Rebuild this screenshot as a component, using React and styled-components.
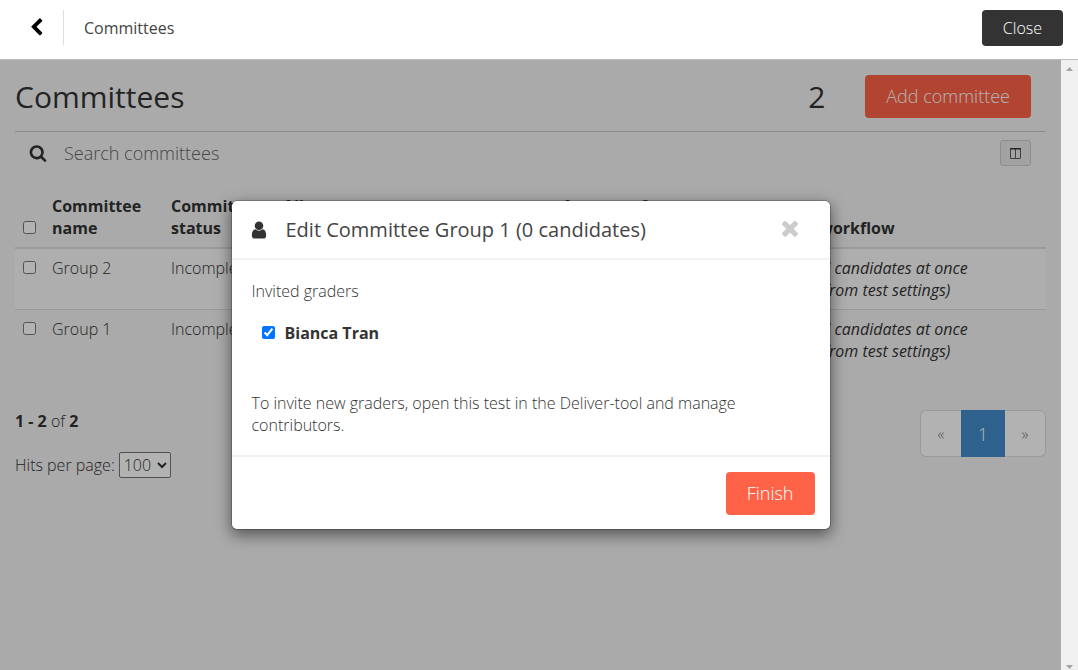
import styled, { createGlobalStyle } from "styled-components"

const GlobalStyle = createGlobalStyle`
  * {
    box-sizing: border-box;
  }
  body {
    margin: 0;
    background: #f4f4f4;
    color: #333;
    font-family: "Open Sans", sans-serif;
    font-size: 16px;
    font-weight: 300;
    line-height: 22px;
  }
  button, input, select {
    font-family: inherit;
    font-weight: inherit;
    color: inherit;
  }
  b {
    font-weight: 700;
  }
`

const Page = styled.div`
  display: flex;
  flex-direction: column;
  min-height: 100vh;
`
const TopBar = styled.header`
  display: flex;
  align-items: center;
  height: 60px;
  padding: 0 15px 4px;
  background: #fff;
  border-bottom: 1px solid #bbb;
`
const BackButton = styled.button`
  display: flex;
  align-items: center;
  justify-content: flex-end;
  width: 49px;
  height: 35px;
  padding: 0 17px 0 0;
  border: 0;
  border-right: 1px solid #ddd;
  background: none;
  color: #000;
`
const TopTitle = styled.span`
  flex: 1;
  padding-left: 20px;
  color: #444;
  font-weight: 400;
`
const CloseButton = styled.button`
  height: 36px;
  padding: 0 21px;
  border: 0;
  border-radius: 4px;
  background: #333;
  color: #fff;
  font-size: 16px;
`
const Frame = styled.div`
  display: flex;
  flex: 1;
`
const View = styled.div`
  position: relative;
  flex: 1;
`
const Content = styled.main`
  padding: 0 15px;
`
const ScrollTrack = styled.div`
  display: flex;
  flex-direction: column;
  align-items: center;
  justify-content: space-between;
  width: 17px;
  padding: 7px 0 1px;
  background: #f0f0f0;
  color: #a3a3a3;
`
const TitleRow = styled.div`
  display: flex;
  align-items: center;
  gap: 40px;
  padding: 15px 15px 13px 0;
  border-bottom: 1px solid #c8c8c8;
`
const Title = styled.h1`
  flex: 1;
  margin: 0;
  font-size: 30px;
  font-weight: 400;
  line-height: 42px;
`
const Count = styled.span`
  font-size: 30px;
  font-weight: 400;
`
const PrimaryButton = styled.button`
  height: 43px;
  padding: 0 21px 2px;
  border: 0;
  border-radius: 4px;
  background: #ff6347;
  color: #fff;
  font-size: 18px;
`
const SearchRow = styled.div`
  display: flex;
  align-items: center;
  padding: 8px 15px 0 14px;
  margin-bottom: 21px;
`
const SearchLabel = styled.label`
  display: flex;
  width: 35px;
`
const SearchInput = styled.input`
  flex: 1;
  height: 26px;
  padding: 0;
  border: 0;
  background: none;
  font-size: 18px;

  &::placeholder {
    color: #666;
    opacity: 1;
  }
`
const ColumnsButton = styled.button`
  display: flex;
  align-items: center;
  justify-content: center;
  width: 31px;
  height: 26px;
  padding: 0;
  border: 1px solid #ccc;
  border-radius: 3px;
  background: #e9e9e9;
`
const Table = styled.table`
  width: 100%;
  table-layout: fixed;
  border-collapse: collapse;
`
const Column = styled.col`
  width: ${(p) => p.$width};
`
const HeadCell = styled.th`
  padding: 8px;
  border-bottom: 2px solid #ddd;
  font-weight: 700;
  text-align: left;
  vertical-align: bottom;
`
const Row = styled.tr`
  background: ${(p) => (p.$striped ? "#f9f9f9" : "transparent")};

  & + & {
    border-top: 1px solid #ddd;
  }
`
const Cell = styled.td`
  padding: 8px;
  vertical-align: top;
`
const Workflow = styled.em`
  font-weight: 400;
`
const Checkbox = styled.input`
  display: block;
  width: 13px;
  height: 13px;
  margin: 4px 0 5px;
`
const BottomRow = styled.div`
  display: flex;
  align-items: flex-start;
  justify-content: space-between;
  margin-top: 40px;
`
const Hits = styled.div`
  display: flex;
  flex-direction: column;
  gap: 20px;
`
const HitsLabel = styled.label`
  display: flex;
  align-items: center;
  gap: 4px;
`
const HitsSelect = styled.select`
  height: 26px;
  width: 52px;
  padding: 0;
  border: 1px solid #767676;
  border-radius: 2px;
  background: #fff;
  font-size: 16px;
`
const Pagination = styled.nav`
  display: flex;
  height: 47px;
  border-radius: 6px;
`
const PageLink = styled.a`
  display: flex;
  align-items: center;
  justify-content: center;
  width: ${(p) => (p.$active ? "44px" : "41px")};
  border: 1px solid ${(p) => (p.$active ? "#428bca" : "#ddd")};
  background: ${(p) => (p.$active ? "#428bca" : "#fff")};
  color: ${(p) => (p.$active ? "#fff" : "#777")};
  font-size: ${(p) => (p.$active ? "18px" : "16px")};
  text-decoration: none;

  &:first-child {
    border-right: 0;
    border-radius: 6px 0 0 6px;
  }
  &:last-child {
    border-left: 0;
    border-radius: 0 6px 6px 0;
  }
`
const Backdrop = styled.div`
  position: absolute;
  inset: 0;
  display: flex;
  align-items: center;
  justify-content: center;
  background: rgba(0, 0, 0, 0.3);
`
const Modal = styled.section`
  width: 100%;
  max-width: 600px;
  border: 1px solid rgba(0, 0, 0, 0.2);
  border-radius: 6px;
  background: #fff;
  background-clip: padding-box;
  box-shadow: 0 5px 15px rgba(0, 0, 0, 0.5);
`
const ModalHeader = styled.header`
  display: flex;
  align-items: center;
  padding: 15px 28px 14px 17px;
  border-bottom: 2px solid #f2f2f2;
`
const ModalTitle = styled.h2`
  flex: 1;
  margin: 0 0 0 17px;
  color: #444;
  font-size: 20px;
  font-weight: 400;
  line-height: 28px;
`
const DismissButton = styled.button`
  display: flex;
  padding: 0 0 4px;
  border: 0;
  background: none;
  color: #ccc;
`
const ModalBody = styled.div`
  padding: 20px 20px 19px;
`
const Paragraph = styled.p`
  margin: 0;
`
const Grader = styled.label`
  display: flex;
  gap: 10px;
  padding: 20px 10px 48px;
  font-weight: 700;
`
const ModalFooter = styled.footer`
  display: flex;
  justify-content: flex-end;
  padding: 15px 15px 14px;
  border-top: 2px solid #f2f2f2;
`

const icons = {
  back: "M1427 301l-531 531 531 531q19 19 19 45t-19 45l-166 166q-19 19-45 19t-45-19l-742-742q-19-19-19-45t19-45l742-742q19-19 45-19t45 19l166 166q19 19 19 45t-19 45z",
  search:
    "M1216 832q0-185-131.5-316.5t-316.5-131.5-316.5 131.5-131.5 316.5 131.5 316.5 316.5 131.5 316.5-131.5 131.5-316.5zm512 832q0 52-38 90t-90 38q-54 0-90-38l-343-342q-179 124-399 124-143 0-273.5-55.5t-225-150-150-225-55.5-273.5 55.5-273.5 150-225 225-150 273.5-55.5 273.5 55.5 225 150 150 225 55.5 273.5q0 220-124 399l343 343q37 37 37 90z",
  user: "M1536 1399q0 109-62.5 187t-150.5 78h-854q-88 0-150.5-78t-62.5-187q0-85 8.5-160.5t31.5-152 58.5-131 94-89 134.5-34.5q131 128 313 128t313-128q76 0 134.5 34.5t94 89 58.5 131 31.5 152 8.5 160.5zm-256-887q0 159-112.5 271.5t-271.5 112.5-271.5-112.5-112.5-271.5 112.5-271.5 271.5-112.5 271.5 112.5 112.5 271.5z",
  times:
    "M1490 1322q0 40-28 68l-136 136q-28 28-68 28t-68-28l-294-294-294 294q-28 28-68 28t-68-28l-136-136q-28-28-28-68t28-68l294-294-294-294q-28-28-28-68t28-68l136-136q28-28 68-28t68 28l294 294 294-294q28-28 68-28t68 28l136 136q28 28 28 68t-28 68l-294 294 294 294q28 28 28 68z",
}

const Icon = ({ name, size }) => (
  <svg
    width={size}
    height={size}
    viewBox="0 0 1792 1792"
    fill="currentColor"
    aria-hidden="true"
  >
    <path d={icons[name]} />
  </svg>
)

const ColumnsIcon = () => (
  <svg width="13" height="11" viewBox="0 0 13 11" aria-hidden="true">
    <path
      d="M1.5 1v9.5h9.5q.5 0 .5-.5V1M6.5 1v9.5"
      fill="none"
      stroke="#5a5a5a"
    />
    <path d="M1 1V.6Q1 0 1.8 0h9.400q.8 0 .8 .6V1.400H1z" fill="#333" />
  </svg>
)

const groups = ["Group 2", "Group 1"]

const App = () => {
  return (
    <Page>
      <GlobalStyle />
      <TopBar>
        <BackButton aria-label="Back">
          <Icon name="back" size={19} />
        </BackButton>
        <TopTitle>Committees</TopTitle>
        <CloseButton>Close</CloseButton>
      </TopBar>
      <Frame>
        <View>
          <Content>
            <TitleRow>
              <Title>Committees</Title>
              <Count>2</Count>
              <PrimaryButton>Add committee</PrimaryButton>
            </TitleRow>
            <SearchRow>
              <SearchLabel htmlFor="search" aria-label="Search committees">
                <Icon name="search" size={18} />
              </SearchLabel>
              <SearchInput id="search" placeholder="Search committees" />
              <ColumnsButton aria-label="Columns">
                <ColumnsIcon />
              </ColumnsButton>
            </SearchRow>
            <Table>
              <colgroup>
                <Column $width="29px" />
                <Column $width="119px" />
                <Column $width="112px" />
                <Column $width="auto" />
                <Column $width="190px" />
                <Column $width="302px" />
              </colgroup>
              <thead>
                <tr>
                  <HeadCell>
                    <Checkbox type="checkbox" aria-label="Select all" />
                  </HeadCell>
                  <HeadCell>Committee name</HeadCell>
                  <HeadCell>Committee status</HeadCell>
                  <HeadCell>
                    Allow
                    <br />
                    access
                  </HeadCell>
                  <HeadCell>
                    Amount of
                    <br />
                    graders
                  </HeadCell>
                  <HeadCell>Grading workflow</HeadCell>
                </tr>
              </thead>
              <tbody>
                {groups.map((group, i) => (
                  <Row key={group} $striped={i % 2 === 0}>
                    <Cell>
                      <Checkbox type="checkbox" aria-label={group} />
                    </Cell>
                    <Cell>{group}</Cell>
                    <Cell>Incomplete</Cell>
                    <Cell />
                    <Cell />
                    <Cell>
                      <Workflow>
                        Grading all candidates at once
                        <br />
                        (inherited from test settings)
                      </Workflow>
                    </Cell>
                  </Row>
                ))}
              </tbody>
            </Table>
            <BottomRow>
              <Hits>
                <div>
                  <b>1 - 2</b> of <b>2</b>
                </div>
                <HitsLabel>
                  Hits per page:
                  <HitsSelect defaultValue="100">
                    <option>100</option>
                  </HitsSelect>
                </HitsLabel>
              </Hits>
              <Pagination aria-label="Pages">
                <PageLink href="#prev">«</PageLink>
                <PageLink href="#1" $active>
                  1
                </PageLink>
                <PageLink href="#next">»</PageLink>
              </Pagination>
            </BottomRow>
          </Content>
          <Backdrop>
            <Modal role="dialog" aria-labelledby="modal-title">
              <ModalHeader>
                <Icon name="user" size={20} />
                <ModalTitle id="modal-title">
                  Edit Committee Group 1 (0 candidates)
                </ModalTitle>
                <DismissButton aria-label="Dismiss">
                  <Icon name="times" size={24} />
                </DismissButton>
              </ModalHeader>
              <ModalBody>
                <Paragraph>Invited graders</Paragraph>
                <Grader>
                  <Checkbox type="checkbox" defaultChecked />
                  Bianca Tran
                </Grader>
                <Paragraph>
                  To invite new graders, open this test in the Deliver-tool and
                  manage contributors.
                </Paragraph>
              </ModalBody>
              <ModalFooter>
                <PrimaryButton>Finish</PrimaryButton>
              </ModalFooter>
            </Modal>
          </Backdrop>
        </View>
        <ScrollTrack aria-hidden="true">
          <svg width="7" height="4" viewBox="0 0 7 4" fill="currentColor">
            <path d="M0 4L3.5 0L7 4z" />
          </svg>
          <svg width="7" height="4" viewBox="0 0 7 4" fill="currentColor">
            <path d="M0 0L3.5 4L7 0z" />
          </svg>
        </ScrollTrack>
      </Frame>
    </Page>
  )
}
export default App
